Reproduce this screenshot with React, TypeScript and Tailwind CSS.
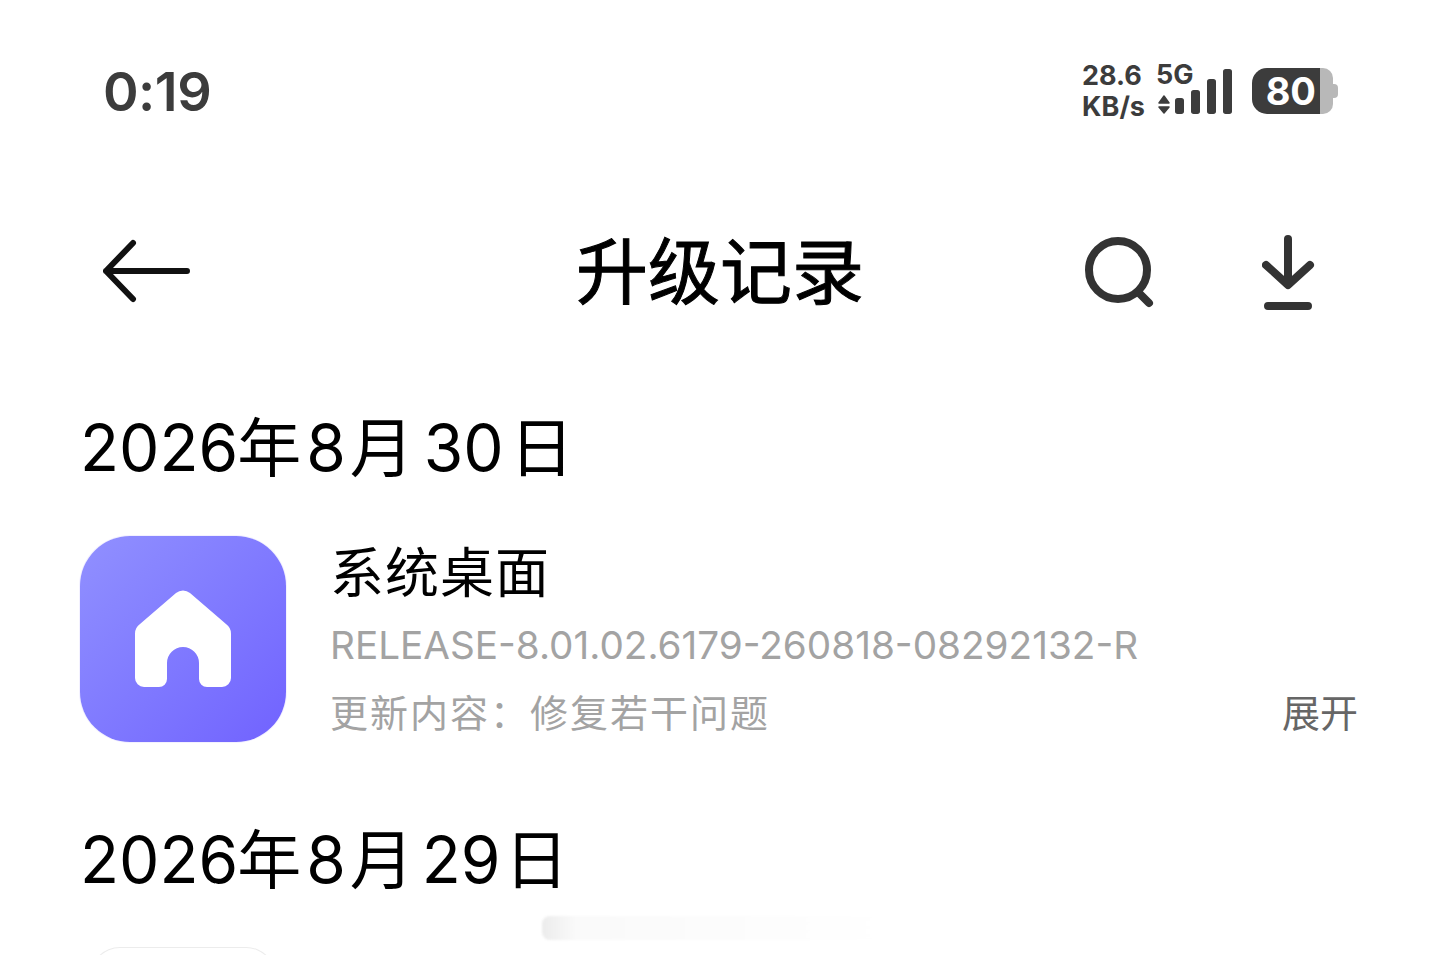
const cjk = "font-['Inter','Noto_Sans_CJK_SC',sans-serif]";

function NetworkIcon() {
  return (
    <div className="relative h-[46px] w-[76px]">
      <span className="absolute -top-[8px] left-0 font-['Inter',sans-serif] text-[27px] leading-[30px] font-bold text-[#3c3c3c]">5G</span>
      <svg className="absolute top-0 left-0" width="76" height="46" viewBox="0 0 76 46" fill="#3c3c3c" stroke="#3c3c3c" strokeWidth="1.5" strokeLinejoin="round">
        <path d="M3 35 L8 28 L13 35 Z M3 39 L13 39 L8 45 Z" />
        <rect x="19.75" y="30.75" width="7.5" height="14.5" rx="2" />
        <rect x="35.75" y="22.75" width="7.5" height="22.5" rx="2" />
        <rect x="51.75" y="11.75" width="7.5" height="33.5" rx="2" />
        <rect x="67.75" y="1.75" width="7.5" height="43.5" rx="2" />
      </svg>
    </div>
  );
}

function Battery() {
  return (
    <div className="flex h-[46px] w-[86px] items-center">
      <div className="flex h-[46px] w-[68px] items-center justify-end rounded-l-[15px] bg-[#3c3c3c] pr-[4px]">
        <span className="font-['Inter',sans-serif] text-[38px] leading-none font-bold text-white">80</span>
      </div>
      <div className="h-[46px] w-[13px] rounded-r-[10px] bg-[#b8b8b8]" />
      <div className="h-[14px] w-[5px] rounded-r-[4px] bg-[#b8b8b8]" />
    </div>
  );
}

function DateHeading({ day }: { day: string }) {
  return (
    <h2 className={`flex items-center text-[64px] leading-none font-normal text-black ${cjk}`}>
      <span>2026</span>
      <span className="-ml-[1px]">年</span>
      <span className="ml-[5px]">8</span>
      <span className="ml-[4px]">月</span>
      <span className={day === "29" ? "ml-[8px]" : "ml-[10px]"}>{day}</span>
      <span className={day === "29" ? "ml-[4px]" : "ml-[6px]"}>日</span>
    </h2>
  );
}

function HomeAppIcon() {
  return (
    <div className="flex h-[206px] w-[206px] shrink-0 items-center justify-center rounded-[50px] bg-linear-to-br from-[#9190ff] to-[#7162ff] ring-1 ring-[#f3f1ff]">
      <svg width="98" height="98" viewBox="0 0 98 98" fill="white">
        <path d="M42 3 a11 11 0 0 1 14 0 L92 34 a12 12 0 0 1 5 10 V88 a9 9 0 0 1 -9 9 H73 a8 8 0 0 1 -8 -8 V73 a16 16 0 0 0 -32 0 V89 a8 8 0 0 1 -8 8 H10 a9 9 0 0 1 -9 -9 V44 a12 12 0 0 1 5 -10 Z" />
      </svg>
    </div>
  );
}

export default function App() {
  return (
    <div className={`h-[955px] w-[1440px] overflow-hidden bg-white ${cjk}`}>
      <div className="flex items-center justify-between pt-[60px] pr-[102px] pl-[103px]">
        <span className="mt-[2px] font-['Inter',sans-serif] text-[54px] leading-[60px] font-semibold tracking-[-0.5px] text-[#3c3c3c]">0:19</span>
        <div className="flex items-center">
          <div className="flex flex-col font-['Inter',sans-serif] text-[27px] leading-[31px] font-bold text-[#3c3c3c]">
            <span>28.6</span>
            <span>KB/s</span>
          </div>
          <div className="ml-[11px]">
            <NetworkIcon />
          </div>
          <div className="ml-[20px]">
            <Battery />
          </div>
        </div>
      </div>

      <div className="mt-[109px] grid h-[80px] grid-cols-[1fr_auto_1fr] items-center px-[103px]">
        <svg width="88" height="64" viewBox="0 0 88 64" fill="none" stroke="#111" strokeWidth="6" strokeLinecap="round" strokeLinejoin="round">
          <path d="M3 32 H84 M30 4 L3 32 L30 60" />
        </svg>
        <h1 className="mt-[2px] text-[72px] leading-none font-normal text-black [-webkit-text-stroke:1px_black]">升级记录</h1>
        <div className="mt-[3px] mr-[21px] flex items-center justify-end gap-[108px]">
          <svg width="70" height="72" viewBox="0 0 70 72" fill="none" stroke="#333" strokeWidth="8" strokeLinecap="round">
            <circle cx="34" cy="33" r="29" />
            <path d="M55 56 L65 66" />
          </svg>
          <svg width="54" height="76" viewBox="0 0 54 76" fill="none" stroke="#333" strokeWidth="8" strokeLinecap="round" strokeLinejoin="round">
            <path d="M26 4 V48 M4 30 L26 50 L48 30 M6 71 H46" />
          </svg>
        </div>
      </div>

      <section className="mt-[105px] pr-[82px] pl-[80px]">
        <DateHeading day="30" />
        <div className="mt-[56px] flex gap-[44px]">
          <HomeAppIcon />
          <div className="flex-1">
            <p className="mt-[8px] text-[54px] leading-[60px] tracking-[1px] text-black">系统桌面</p>
            <p className="mt-[18px] text-[38.7px] leading-[46px] text-[#a3a3a3]">RELEASE-8.01.02.6179-260818-08292132-R</p>
            <div className="mt-[22px] flex items-center justify-between">
              <p className="text-[38px] leading-[46px] tracking-[2px] text-[#a3a3a3]">更新内容：修复若干问题</p>
              <span className="text-[38px] leading-[46px] text-[#666]">展开</span>
            </div>
          </div>
        </div>
      </section>

      <section className="relative mt-[86px] pl-[80px]">
        <DateHeading day="29" />
        <div className="mt-[55px] h-[40px] w-[186px] translate-x-[10px] rounded-t-[30px] border-t border-r border-l border-[#ececec]" />
        <div className="absolute top-[88px] left-[542px] h-[24px] w-[340px] rounded-l-[8px] bg-linear-to-r from-[#ececec] via-[#fafafa] via-10% to-white blur-[1px]" />
      </section>
    </div>
  );
}
